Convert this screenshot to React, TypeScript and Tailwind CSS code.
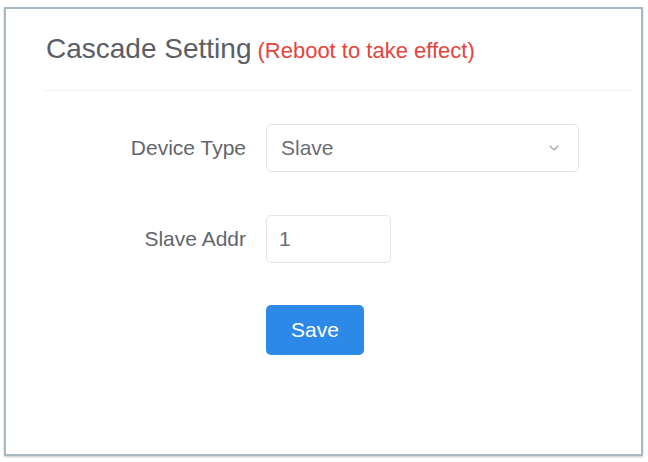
import { ChevronDown } from 'lucide-react';

const font = { fontFamily: '"Liberation Sans", Arial, sans-serif' };

function FormRow({ label, children }: { label: string; children: React.ReactNode }) {
  return (
    <div className="flex items-center">
      <div className="w-[260px] pr-[20px] text-right text-[21px] leading-[24px] text-[#63666c]">{label}</div>
      {children}
    </div>
  );
}

export default function App() {
  return (
    <div className="w-[648px] h-[462px] bg-white pt-[7px] pl-[4px]" style={font}>
      <div className="w-[639px] h-[449px] border-2 border-[#a9b8c5] bg-white shadow-[0_1px_2px_rgba(80,100,120,0.35)]">
        <div className="pt-[24px] pl-[40px] flex items-baseline gap-[6px]">
          <span className="text-[28px] leading-[32px] text-[#5a5e66]">Cascade Setting</span>
          <span className="text-[22px] leading-[32px] text-[#e5453d]">(Reboot to take effect)</span>
        </div>
        <div className="mt-[23px] ml-[38px] mr-[8px] h-px bg-[#f0f0f0]" />

        <div className="mt-[33px] flex flex-col gap-[43px]">
          <FormRow label="Device Type">
            <div className="w-[313px] h-[48px] border border-[#e2e4e8] rounded-[5px] flex items-center justify-between pl-[14px] pr-[16px]">
              <span className="text-[21px] text-[#6b6e75]">Slave</span>
              <ChevronDown className="w-[16px] h-[16px] text-[#a0a4ab]" strokeWidth={1.75} />
            </div>
          </FormRow>
          <FormRow label="Slave Addr">
            <div className="w-[125px] h-[48px] border border-[#e2e4e8] rounded-[5px] flex items-center pl-[12px]">
              <span className="text-[21px] text-[#6b6e75]">1</span>
            </div>
          </FormRow>
        </div>

        <div className="mt-[42px] pl-[260px]">
          <button className="w-[98px] h-[50px] rounded-[5px] bg-[#2d89e7] text-white text-[21px]">Save</button>
        </div>
      </div>
    </div>
  );
}
